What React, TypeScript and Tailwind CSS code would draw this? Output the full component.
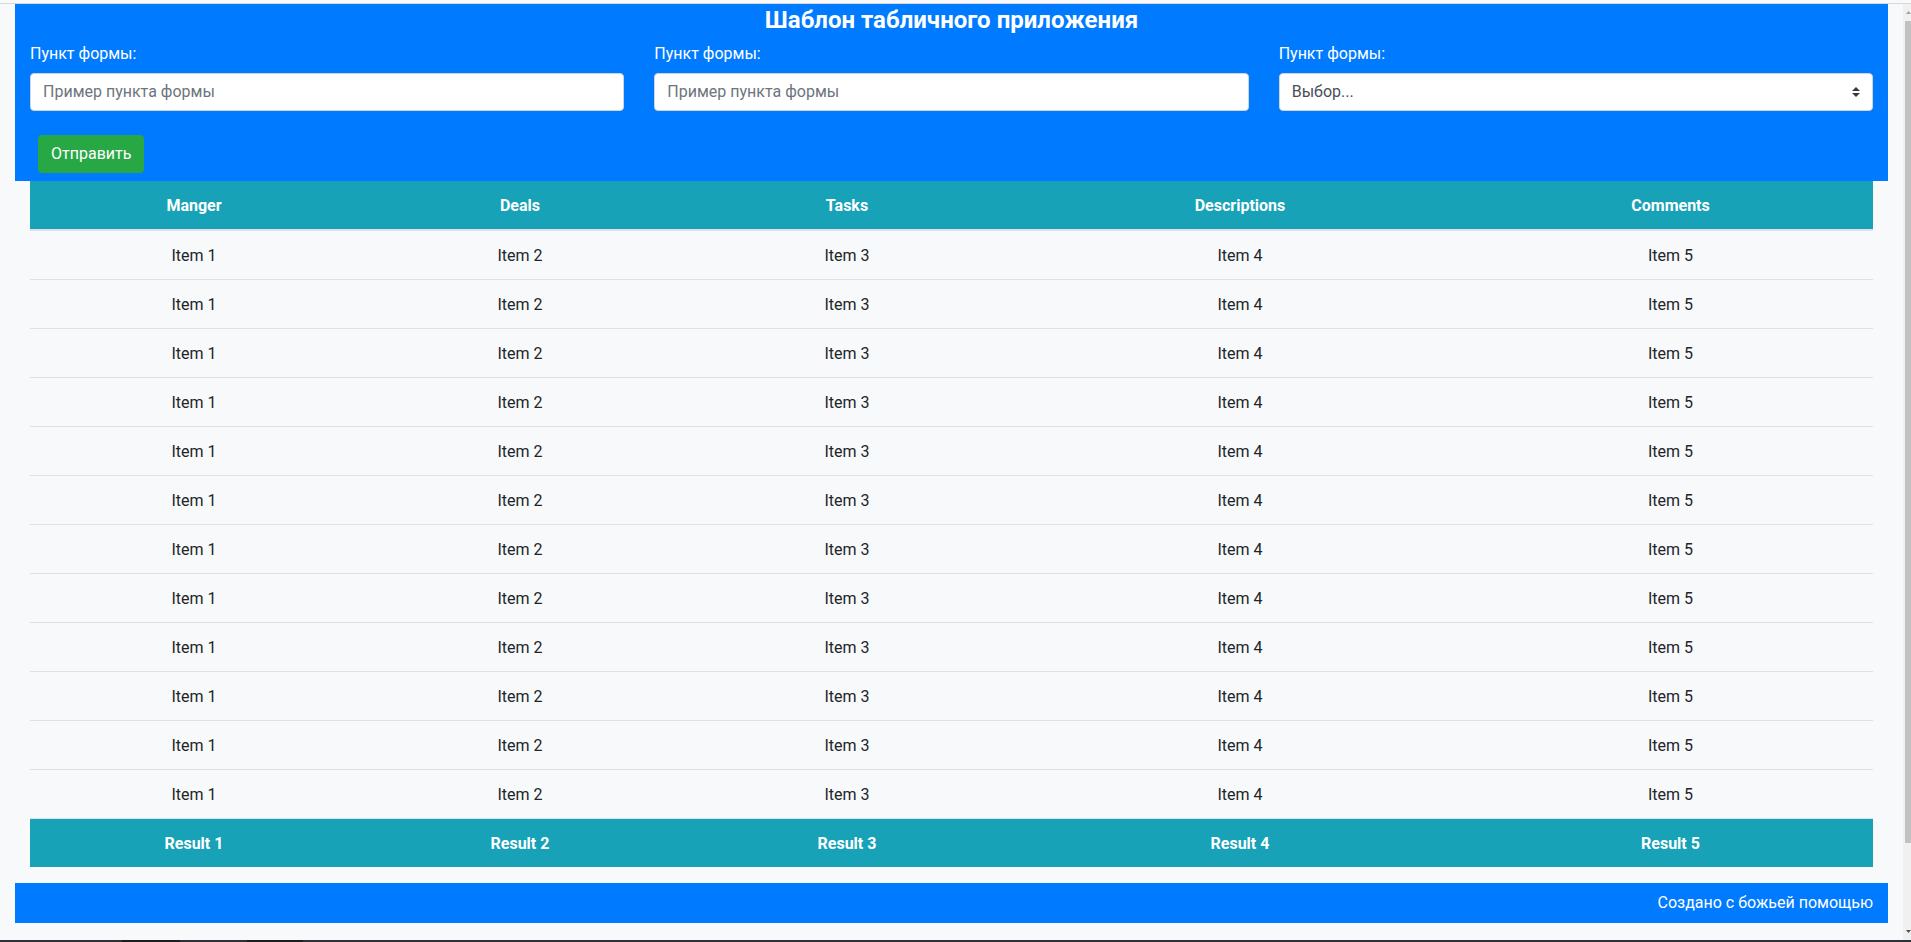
import React from "react";

const cols = ["Manger", "Deals", "Tasks", "Descriptions", "Comments"];
const colWidths = ["w-[328px]", "w-[324px]", "w-[330px]", "w-[456px]", "w-[405px]"];

function FormCol({ kind }: { kind: "input" | "select" }) {
  return (
    <div className="px-[15px] mb-[16px]">
      <label className="block pt-[1px] mb-[7px] text-white">Пункт формы:</label>
      {kind === "input" ? (
        <div className="h-[38px] bg-white border border-[#ced4da] rounded-[4px] px-[12px] flex items-center text-[#6c757d]">
          Пример пункта формы
        </div>
      ) : (
        <div className="h-[38px] bg-white border border-[#ced4da] rounded-[4px] pl-[12px] pr-[12px] flex items-center justify-between text-[#495057]">
          <span>Выбор...</span>
          <svg width="8" height="10" viewBox="0 0 4 5">
            <path d="M2 0L0 2h4zm0 5L0 3h4z" fill="#343a40" />
          </svg>
        </div>
      )}
    </div>
  );
}

export default function App() {
  const rows = Array.from({ length: 12 });
  return (
    <div className="h-[942px] w-[1911px] flex flex-col bg-[#f8f9fa] font-['Roboto','Noto_Sans',sans-serif] text-[16px] leading-[24px] text-[#212529] overflow-hidden">
      <div className="h-[4px] shrink-0 border-b border-[#d9d9d9]" />
      <div className="flex flex-1 min-h-0">
        <div className="flex-1 px-[15px] flex flex-col">
          <header className="bg-[#007bff] text-white">
            <h4 className="text-center text-[24px] leading-[28.8px] font-bold pt-[2px] mb-[6px]">
              Шаблон табличного приложения
            </h4>
            <div className="grid grid-cols-3">
              <FormCol kind="input" />
              <FormCol kind="input" />
              <FormCol kind="select" />
            </div>
            <div className="px-[15px] flex">
              <button className="m-[8px] h-[38px] px-[12px] bg-[#28a745] border border-[#28a745] rounded-[4px] text-white">
                Отправить
              </button>
            </div>
          </header>
          <div className="px-[15px] mb-[16px]">
            <table className="w-full table-fixed border-collapse">
              <colgroup>
                {colWidths.map((w, i) => (
                  <col key={i} className={w} />
                ))}
              </colgroup>
              <thead>
                <tr className="bg-[#17a2b8] text-white">
                  {cols.map((c) => (
                    <th key={c} className="pt-[13px] pb-[11px] px-[12px] font-bold text-center border-b-2 border-[#dee2e6]">
                      {c}
                    </th>
                  ))}
                </tr>
              </thead>
              <tbody>
                {rows.map((_, r) => (
                  <tr key={r}>
                    {[1, 2, 3, 4, 5].map((n) => (
                      <td key={n} className="pt-[13px] pb-[11px] px-[12px] text-center border-t border-[#dee2e6]">
                        Item {n}
                      </td>
                    ))}
                  </tr>
                ))}
                <tr className="bg-[#17a2b8] text-white">
                  {[1, 2, 3, 4, 5].map((n) => (
                    <td key={n} className="pt-[13px] pb-[11px] px-[12px] text-center font-bold border-t border-[#dee2e6]">
                      Result {n}
                    </td>
                  ))}
                </tr>
              </tbody>
            </table>
          </div>
          <footer className="bg-[#007bff] text-white text-right py-[8px] pr-[15px]">
            Создано с божьей помощью
          </footer>
        </div>
        <div className="w-[8px] bg-[#f0f0f0] flex flex-col">
          <div className="h-[17px] flex items-center justify-center pl-[2px]">
            <svg width="5" height="3" viewBox="0 0 5 3">
              <path d="M2.5 0L5 3H0z" fill="#a3a3a3" />
            </svg>
          </div>
          <div className="h-[822px] ml-[2px] bg-[#c1c1c1]" />
          <div className="flex-1" />
          <div className="h-[17px] flex items-center justify-center pl-[2px]">
            <svg width="5" height="3" viewBox="0 0 5 3">
              <path d="M0 0H5L2.5 3z" fill="#505050" />
            </svg>
          </div>
        </div>
      </div>
      <div className="h-[2px] shrink-0 bg-[#2d3035] flex">
        <div className="w-[122px]" />
        <div className="w-[58px] bg-[#1a1c1f]" />
        <div className="w-[67px]" />
        <div className="w-[56px] bg-[#1a1c1f]" />
      </div>
    </div>
  );
}
